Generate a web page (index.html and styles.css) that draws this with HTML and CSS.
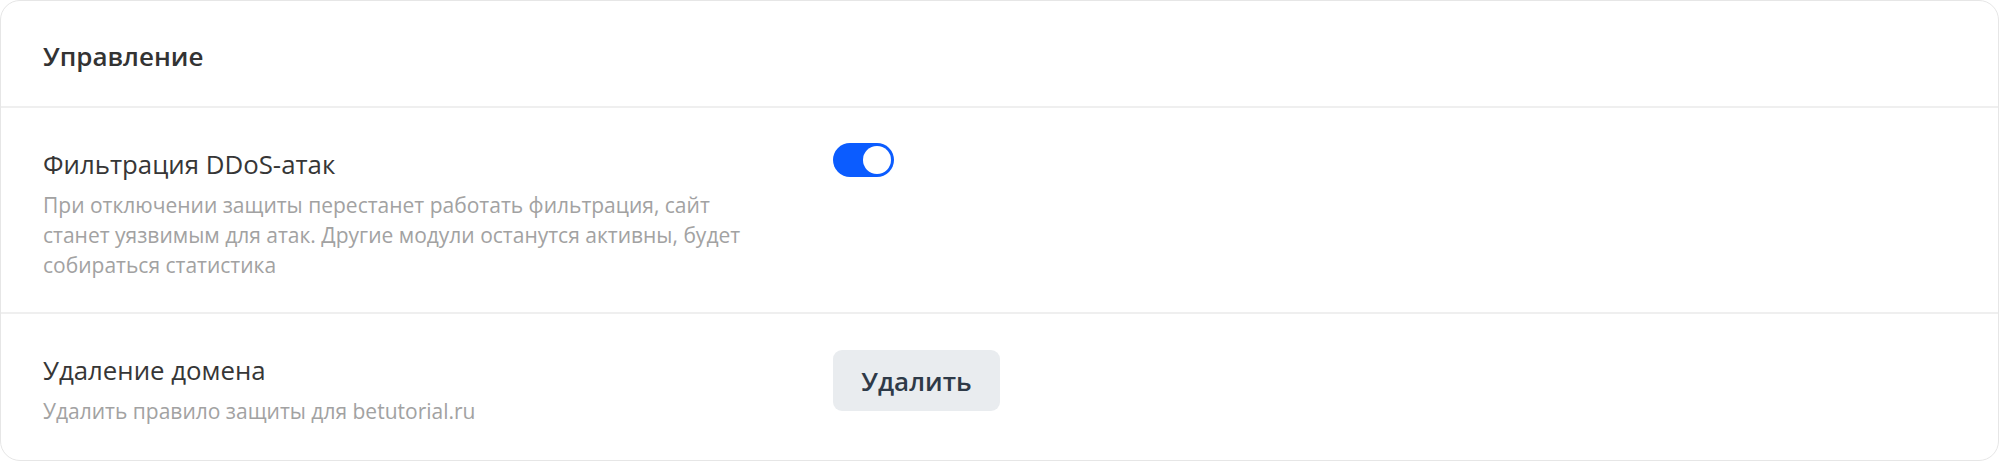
FILE: index.html
```html
<!DOCTYPE html>
<html lang="ru">
<head>
<meta charset="utf-8">
<title>Управление</title>
<link rel="stylesheet" href="styles.css">
</head>
<body>
<section class="card">
  <header class="card-head">Управление</header>
  <div class="row">
    <div class="info">
      <div class="title">Фильтрация DDoS-атак</div>
      <div class="desc">При отключении защиты перестанет работать фильтрация, сайт станет уязвимым для атак. Другие модули останутся активны, будет собираться статистика</div>
    </div>
    <div class="control">
      <span class="toggle"><span class="knob"></span></span>
    </div>
  </div>
  <div class="row">
    <div class="info">
      <div class="title">Удаление домена</div>
      <div class="desc">Удалить правило защиты для betutorial.ru</div>
    </div>
    <div class="control">
      <button class="btn" type="button">Удалить</button>
    </div>
  </div>
</section>
</body>
</html>
```

FILE: styles.css
```css
html, body {
  margin: 0;
  padding: 0;
  background: #ffffff;
}
body {
  font-family: "Open Sans", "Noto Sans", sans-serif;
  width: 1999px;
  height: 461px;
  overflow: hidden;
}
.card {
  box-sizing: border-box;
  width: 1999px;
  height: 461px;
  border: 1px solid #e6e6e6;
  border-radius: 20px;
  background: #ffffff;
  overflow: hidden;
}
.card-head {
  padding: 38px 42px 33px;
  font-size: 26px;
  line-height: 34px;
  font-weight: 600;
  color: #333333;
  border-bottom: 2px solid #efefef;
}
.row {
  display: flex;
  align-items: flex-start;
  padding: 34px 42px 32px;
  gap: 75px;
}
.row + .row {
  border-top: 2px solid #efefef;
}
.info {
  width: 715px;
  padding-top: 7px;
}
.title {
  font-size: 25.8px;
  line-height: 30px;
  color: #363636;
}
.desc {
  margin-top: 11px;
  font-size: 21px;
  line-height: 30px;
  color: #a2a2a2;
}
.control {
  display: flex;
  padding-top: 1px;
}
.toggle {
  box-sizing: border-box;
  display: flex;
  align-items: center;
  justify-content: flex-end;
  width: 61px;
  height: 34px;
  padding: 3px;
  border-radius: 17px;
  background: #0b5cff;
}
.knob {
  width: 28px;
  height: 28px;
  border-radius: 50%;
  background: #ffffff;
}
.btn {
  box-sizing: border-box;
  width: 167px;
  height: 61px;
  margin-top: 1px;
  border: none;
  border-radius: 9px;
  background: #e9ecef;
  color: #2e3a48;
  font-family: "Open Sans", "Noto Sans", sans-serif;
  font-size: 26px;
  font-weight: 600;
  padding: 0;
  cursor: pointer;
}
```
